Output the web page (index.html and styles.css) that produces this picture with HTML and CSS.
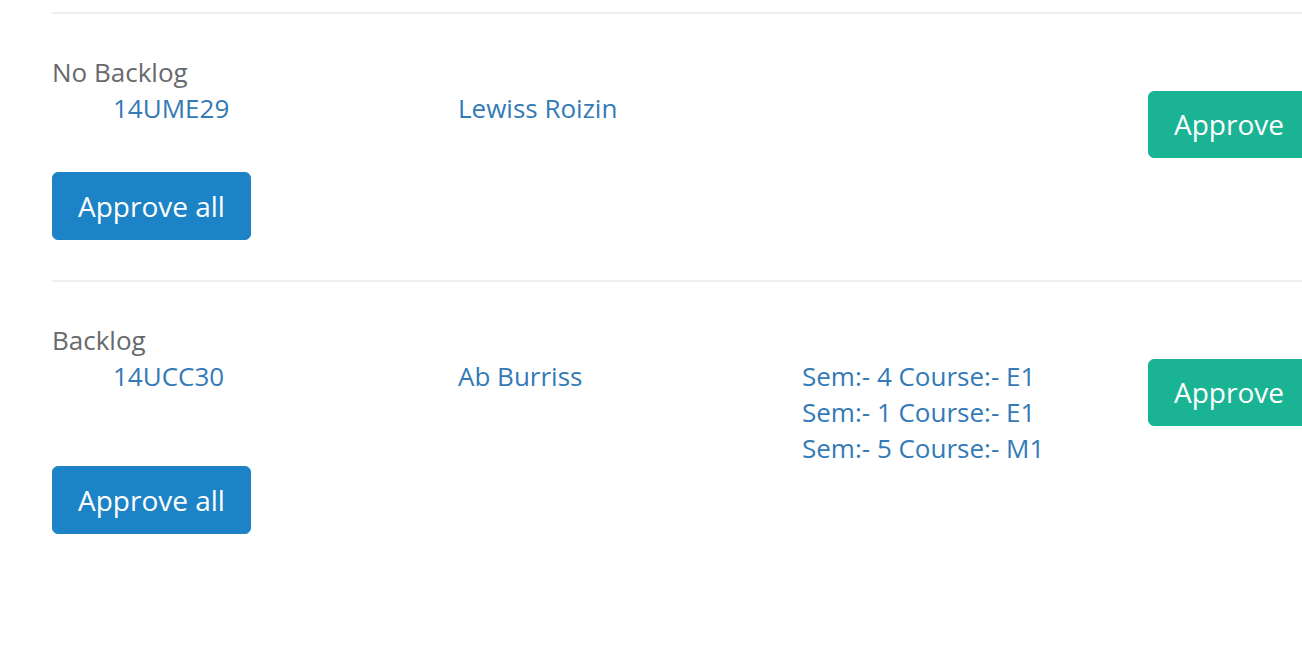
FILE: index.html
```html
<!DOCTYPE html>
<html>
<head>
<meta charset="utf-8">
<link rel="stylesheet" href="styles.css">
</head>
<body>
<div class="page">
  <section class="group">
    <div class="label">No Backlog</div>
    <div class="row">
      <a class="cell id">14UME29</a>
      <a class="cell name">Lewiss Roizin</a>
      <div class="cell courses"></div>
      <div class="cell action"><button class="btn btn-approve">Approve</button></div>
    </div>
    <button class="btn btn-all">Approve all</button>
  </section>
  <section class="group">
    <div class="label">Backlog</div>
    <div class="row">
      <a class="cell id">14UCC30</a>
      <a class="cell name">Ab Burriss</a>
      <div class="cell courses">
        <a class="course">Sem:- 4 Course:- E1</a>
        <a class="course">Sem:- 1 Course:- E1</a>
        <a class="course">Sem:- 5 Course:- M1</a>
      </div>
      <div class="cell action"><button class="btn btn-approve">Approve</button></div>
    </div>
    <button class="btn btn-all">Approve all</button>
  </section>
</div>
</body>
</html>
```
FILE: styles.css
```css
html, body {
  margin: 0;
  padding: 0;
  overflow: hidden;
  background: #fff;
}
body {
  font-family: "Open Sans", "Liberation Sans", sans-serif;
  font-size: 26px;
  line-height: 36px;
  color: #676a6c;
}
.page {
  width: 1400px;
  padding: 12px 0 0 52px;
}
.group {
  border-top: 2px solid #eeeeee;
  padding-top: 40px;
  padding-bottom: 40px;
}
.label {
  color: #676a6c;
}
.row {
  display: grid;
  grid-template-columns: 61px 345px 344px 346px auto;
}
.row::before {
  content: "";
}
.cell {
  color: #337ab7;
  text-decoration: none;
}
.courses {
  display: flex;
  flex-direction: column;
}
.course {
  color: #337ab7;
}
.action {
  padding-top: 1px;
}
.btn {
  font-family: "Open Sans", "Liberation Sans", sans-serif;
  font-size: 28px;
  line-height: 35px;
  color: #fff;
  border: 1px solid transparent;
  border-radius: 6px;
  padding: 15px 25px;
  cursor: pointer;
  display: block;
}
.btn-approve {
  background: #1ab394;
  border-color: #1ab394;
  margin-bottom: 14px;
}
.btn-all {
  background: #1c84c6;
  border-color: #1c84c6;
  line-height: 36px;
  padding: 15px 25px;
}
```
